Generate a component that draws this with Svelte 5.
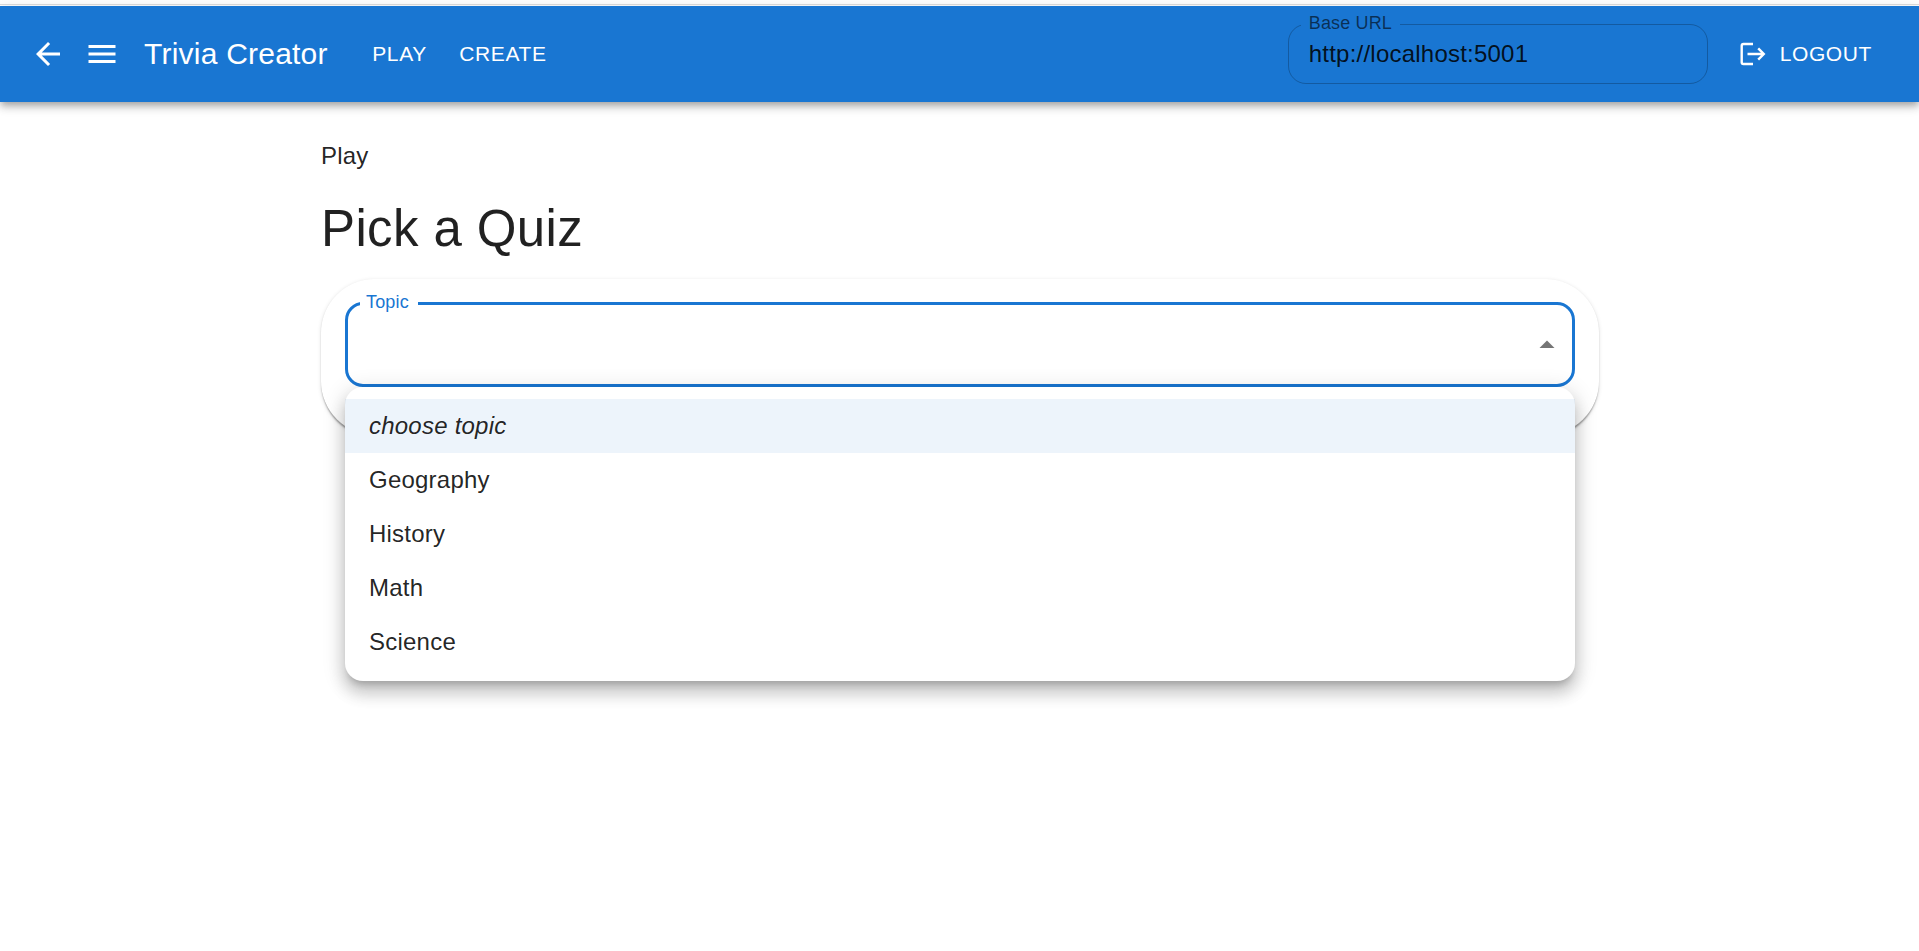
<script>
  const topics = ['Geography', 'History', 'Math', 'Science'];
  const links = ['Play', 'Create'];
</script>

<div class="page">
  <header class="bar">
    <svg class="icon" viewBox="0 0 24 24"><path d="M20 11H7.83l5.59-5.59L12 4l-8 8 8 8 1.41-1.41L7.83 13H20v-2z" /></svg>
    <svg class="icon menu-icon" viewBox="0 0 24 24"><path d="M3 18h18v-2H3v2zm0-5h18v-2H3v2zm0-7v2h18V6H3z" /></svg>
    <div class="title">Trivia Creator</div>
    <nav>
      {#each links as link}
        <span class="link">{link}</span>
      {/each}
    </nav>
    <div class="field url">
      <fieldset><legend>Base URL</legend></fieldset>
      <span class="value">http://localhost:5001</span>
    </div>
    <button class="logout">
      <svg viewBox="0 0 36 36"><path d="M21 8H11.5Q9.7 8 9.7 9.8V26.2Q9.7 28 11.5 28H21M15.5 18H32M26.2 12.3 31.8 18 26.2 23.7" /></svg>
      <span>Logout</span>
    </button>
  </header>

  <main>
    <div class="crumb">Play</div>
    <h1>Pick a Quiz</h1>
    <section class="card">
      <div class="field select">
        <fieldset><legend>Topic</legend></fieldset>
        <svg class="icon" viewBox="0 0 24 24"><path d="m7 14 5-5 5 5z" /></svg>
        <ul class="menu">
          <li class="selected"><em>choose topic</em></li>
          {#each topics as topic}
            <li>{topic}</li>
          {/each}
        </ul>
      </div>
    </section>
  </main>
</div>

<style>
  :global(body) {
    margin: 0;
    background: #fff;
  }
  .page {
    box-sizing: border-box;
    min-height: 100vh;
    padding-top: 4px;
    font-family: "Liberation Sans", Arial, sans-serif;
    font-size: 24px;
    line-height: 36px;
    color: rgba(0, 0, 0, 0.87);
  }
  .page::before {
    content: "";
    display: block;
    height: 1px;
    margin-bottom: 1px;
    background: #ddd;
  }
  .bar {
    box-sizing: border-box;
    height: 96px;
    padding: 0 36px 0 30px;
    display: flex;
    align-items: center;
    background: #1976d2;
    color: #fff;
    box-shadow: 0 3px 6px -1.5px rgba(0, 0, 0, 0.2), 0 6px 7.5px rgba(0, 0, 0, 0.14), 0 1.5px 15px rgba(0, 0, 0, 0.12);
  }
  .icon {
    width: 36px;
    height: 36px;
    fill: currentColor;
    flex: none;
  }
  .menu-icon { margin-left: 18px; }
  .title {
    margin-left: 24px;
    font-size: 30px;
    letter-spacing: 0.225px;
    white-space: nowrap;
  }
  nav {
    display: flex;
    gap: 32.5px;
    margin-left: 44.5px;
    flex: 1;
  }
  .link, .logout {
    font: 21px/36px "Liberation Sans", Arial, sans-serif;
    letter-spacing: 0.6px;
    text-transform: uppercase;
    color: #fff;
  }
  .logout {
    display: flex;
    align-items: center;
    gap: 12px;
    margin-left: 24px;
    padding: 0 11px 0 0;
    border: 0;
    background: none;
  }
  .logout svg {
    width: 36px;
    height: 36px;
    fill: none;
    stroke: #fff;
    stroke-width: 2.4;
  }
  .field {
    position: relative;
    box-sizing: border-box;
    display: flex;
    align-items: center;
  }
  fieldset {
    position: absolute;
    inset: -10px 0 0;
    margin: 0;
    padding: 0 12px;
    border: 1px solid rgba(0, 0, 0, 0.23);
    border-radius: 18px;
    min-width: 0;
  }
  legend {
    height: 20px;
    padding: 0 8px;
    font-size: 18px;
    line-height: 18px;
    letter-spacing: 0.16px;
    color: rgba(0, 0, 0, 0.6);
  }
  .url {
    width: 420px;
    height: 60px;
    padding: 0 21px;
    color: rgba(0, 0, 0, 0.87);
  }
  .value { letter-spacing: 0.225px; }
  main {
    width: 1278px;
    margin: 0 auto;
    padding: 36px 0 0 1px;
  }
  .crumb { letter-spacing: 0.225px; }
  h1 {
    margin: 23px 0 19px;
    font-size: 51px;
    line-height: 63px;
    font-weight: 400;
    letter-spacing: 0.375px;
  }
  .card {
    padding: 24px 24px 48px;
    border-radius: 54px;
    box-shadow: 0 3px 1.5px -1.5px rgba(0, 0, 0, 0.2), 0 1.5px 1.5px rgba(0, 0, 0, 0.14), 0 1.5px 4.5px rgba(0, 0, 0, 0.12);
  }
  .select {
    height: 84px;
    justify-content: flex-end;
    padding-right: 10px;
  }
  .select .icon { color: rgba(0, 0, 0, 0.54); }
  .select fieldset {
    border: 3px solid #1976d2;
  }
  .select legend {
    padding: 0 9px 0 6px;
    color: #1976d2;
  }
  .menu {
    position: absolute;
    top: 100%;
    left: 0;
    right: 0;
    margin: 0;
    padding: 12px 0;
    list-style: none;
    background: #fff;
    border-radius: 18px;
    box-shadow: 0 7.5px 7.5px -4.5px rgba(0, 0, 0, 0.2), 0 12px 15px 1.5px rgba(0, 0, 0, 0.14), 0 4.5px 21px 3px rgba(0, 0, 0, 0.12);
  }
  li {
    padding: 9px 24px;
    letter-spacing: 0.225px;
  }
  .selected { background: rgba(25, 118, 210, 0.08); }
</style>
